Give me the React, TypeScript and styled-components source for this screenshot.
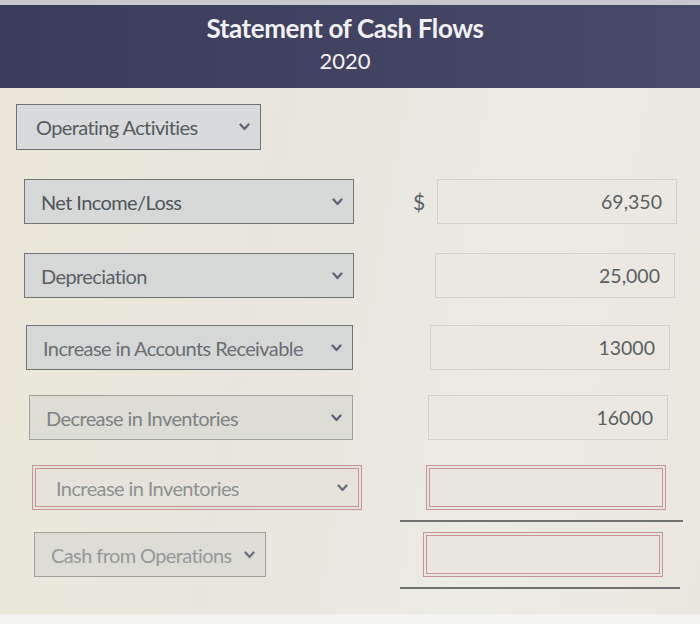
import styled, { createGlobalStyle } from "styled-components";

const GlobalStyle = createGlobalStyle`
  html, body {
    margin: 0;
    padding: 0;
  }
  body {
    font-family: Lato, "Open Sans", "Liberation Sans", sans-serif;
    background: #e9e6da;
  }
`;

const Page = styled.div`
  height: 100vh;
  display: flex;
  flex-direction: column;
  background: linear-gradient(100deg, #ebe8da 0%, #e8e6dd 45%, #ecebe4 70%, #e9e7de 100%);
  overflow: hidden;
`;

const TopEdge = styled.div`
  height: 5px;
  background: #c9c9cb;
`;

const Header = styled.header`
  height: 83px;
  background: linear-gradient(90deg, #3b3c5b 0%, #434463 60%, #4a4b68 100%);
  color: #f2f2f4;
  display: flex;
  flex-direction: column;
  align-items: center;
  padding-top: 8px;
  box-sizing: border-box;
`;

const Title = styled.h1`
  margin: 0;
  font-size: 26px;
  font-weight: 700;
  line-height: 30px;
  letter-spacing: -0.4px;
  margin-left: -10px;
`;

const Year = styled.div`
  font-size: 22px;
  line-height: 26px;
  margin-top: 5px;
  margin-left: -10px;
`;

const Content = styled.main`
  flex: 1;
  display: flex;
  flex-direction: column;
  padding-top: 16px;
`;

const SectionSelect = styled.div`
  margin-left: 16px;
  width: 245px;
  height: 46px;
  box-sizing: border-box;
  border: 1.5px solid #6f7272;
  background: #d8dadb;
  display: flex;
  align-items: center;
  justify-content: space-between;
  padding: 0 10px 0 19px;
  font-size: 20px;
  color: #555a60;
  letter-spacing: -0.6px;
`;

const Row = styled.div<{ $top: number; $left: number; $right: number; $select: number }>`
  display: grid;
  grid-template-columns: ${(p) => p.$select}px 1fr 24px 240px;
  align-items: center;
  padding: 0 ${(p) => p.$right}px 0 ${(p) => p.$left}px;
  margin-top: ${(p) => p.$top}px;
`;

const Select = styled.div<{ $width?: number; $tone: string; $error?: boolean; $faded?: boolean }>`
  width: ${(p) => (p.$width ? `${p.$width}px` : "100%")};
  height: 45px;
  box-sizing: border-box;
  border: ${(p) => (p.$error ? "4px double #c49592" : `1.5px solid ${p.$faded ? "#9da09c" : "#727573"}`)};
  background: ${(p) => (p.$error ? "#e6e4da" : p.$faded ? "#dddcd5" : "#d6d8d8")};
  display: flex;
  align-items: center;
  justify-content: space-between;
  padding: 0 10px 0 ${(p) => (p.$error ? 20 : 16)}px;
  font-size: 20px;
  color: ${(p) => p.$tone};
  letter-spacing: -0.6px;
`;

const Dollar = styled.span`
  font-size: 21px;
  color: #5d6266;
  justify-self: start;
`;

const Amount = styled.div<{ $error?: boolean }>`
  height: 45px;
  box-sizing: border-box;
  border: ${(p) => (p.$error ? "4px double #c49592" : "1.5px solid #d0d0cc")};
  background: ${(p) => (p.$error ? "#e8e6de" : "#eae8e0")};
  display: flex;
  align-items: center;
  justify-content: flex-end;
  padding-right: 14px;
  font-size: 19.5px;
  color: #5a5f63;
`;

const Rule = styled.div<{ $top: number; $right: number }>`
  margin: ${(p) => p.$top}px ${(p) => p.$right}px 0 400px;
  height: 2px;
  background: #6f716e;
`;

const Footer = styled.div`
  height: 10px;
  background: #f3f3f1;
`;

function Chevron({ color = "#5c6474" }: { color?: string }) {
  return (
    <svg width="11" height="8" viewBox="0 0 11 8">
      <polyline points="1.5,1.5 5.5,6 9.5,1.5" fill="none" stroke={color} strokeWidth="2.3" strokeLinejoin="round" strokeLinecap="round" />
    </svg>
  );
}

type Line = {
  label: string;
  amount: string;
  tone: string;
  top: number;
  left: number;
  right: number;
  select: number;
  dollar?: boolean;
  faded?: boolean;
};

const lines: Line[] = [
  { label: "Net Income/Loss", amount: "69,350", tone: "#50555b", top: 29, left: 24, right: 23, select: 330, dollar: true },
  { label: "Depreciation", amount: "25,000", tone: "#5a5f64", top: 29, left: 24, right: 25, select: 330 },
  { label: "Increase in Accounts Receivable", amount: "13000", tone: "#6a6e72", top: 27, left: 26, right: 30, select: 327 },
  { label: "Decrease in Inventories", amount: "16000", tone: "#7e8284", top: 25, left: 29, right: 32, select: 324, faded: true },
];

export default function App() {
  return (
    <>
      <GlobalStyle />
      <Page>
        <TopEdge />
        <Header>
          <Title>Statement of Cash Flows</Title>
          <Year>2020</Year>
        </Header>
        <Content>
          <SectionSelect>
            Operating Activities
            <Chevron />
          </SectionSelect>

          {lines.map((l) => (
            <Row key={l.label} $top={l.top} $left={l.left} $right={l.right} $select={l.select}>
              <Select $tone={l.tone} $faded={l.faded}>
                {l.label}
                <Chevron />
              </Select>
              <span />
              {l.dollar ? <Dollar>$</Dollar> : <span />}
              <Amount>{l.amount}</Amount>
            </Row>
          ))}

          <Row $top={25} $left={32} $right={34} $select={330}>
            <Select $tone="#8e9192" $error>
              Increase in Inventories
              <Chevron color="#6a7080" />
            </Select>
            <span />
            <span />
            <Amount $error />
          </Row>
          <Rule $top={10} $right={17} />

          <Row $top={10} $left={34} $right={37} $select={330}>
            <Select $tone="#969898" $width={232} $faded>
              Cash from Operations
              <Chevron color="#6a7080" />
            </Select>
            <span />
            <span />
            <Amount $error />
          </Row>
          <Rule $top={10} $right={20} />
        </Content>
        <Footer />
      </Page>
    </>
  );
}
